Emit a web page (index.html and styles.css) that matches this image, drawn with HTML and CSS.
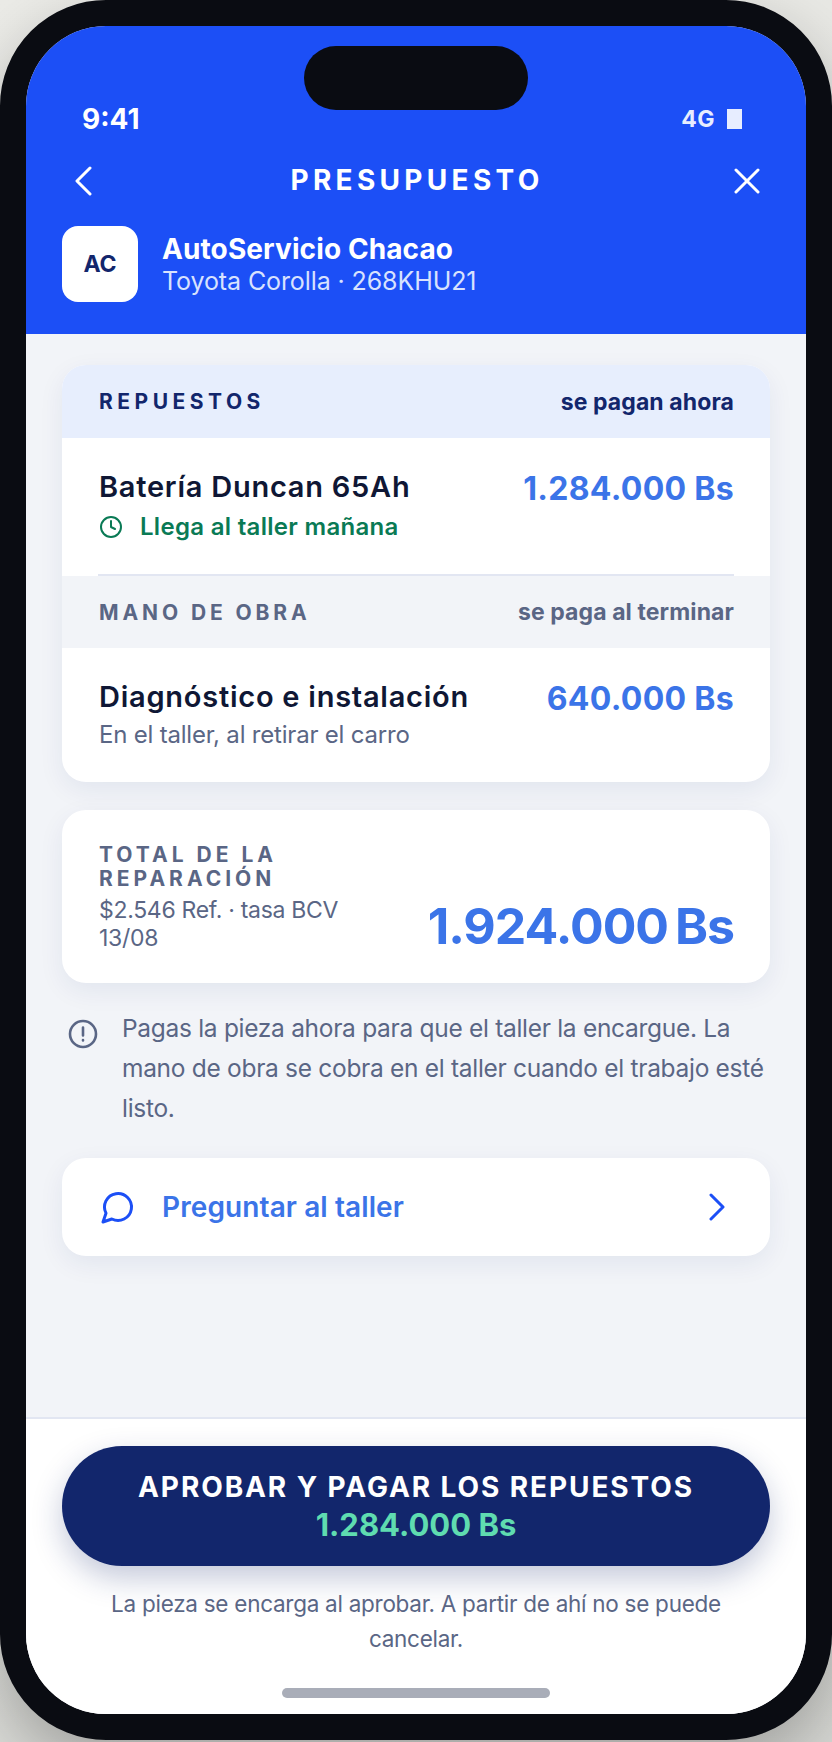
FILE: index.html
```html
<!DOCTYPE html>
<html lang="es">
<head>
    <meta charset="UTF-8">
    <title>Presupuesto</title>
    <link rel="stylesheet" href="styles.css">
</head>
<body>

    <div class="phone">
        <div class="screen">
            <div class="notch"></div>

            <!-- Blue header -->
            <header class="header">
                <div class="status">
                    <span class="time">9:41</span>
                    <span class="signal">4G<i class="battery"></i></span>
                </div>
                <div class="nav">
                    <svg class="nav-icon" width="18" height="30" viewBox="0 0 18 30"><polyline points="16,2 3,15 16,28"/></svg>
                    <h1>PRESUPUESTO</h1>
                    <svg class="nav-icon nav-close" width="26" height="26" viewBox="0 0 26 26"><path d="M2 2 24 24M24 2 2 24"/></svg>
                </div>
                <div class="shop">
                    <div class="avatar">AC</div>
                    <div>
                        <div class="shop-name">AutoServicio Chacao</div>
                        <div class="shop-car">Toyota Corolla · 268KHU21</div>
                    </div>
                </div>
            </header>

            <main class="content">
                <!-- Breakdown -->
                <section class="card">
                    <div class="band band-parts">
                        <span class="band-title">REPUESTOS</span>
                        <span class="band-note">se pagan ahora</span>
                    </div>
                    <div class="row row-first">
                        <div>
                            <div class="row-title">Batería Duncan 65Ah</div>
                            <div class="eta">
                                <svg width="24" height="24" viewBox="0 0 24 24"><circle cx="12" cy="12" r="10"/><polyline points="12,6 12,12 16,14"/></svg>
                                Llega al taller mañana
                            </div>
                        </div>
                        <div class="price">1.284.000 Bs</div>
                    </div>
                    <div class="band band-labor">
                        <span class="band-title">MANO DE OBRA</span>
                        <span class="band-note">se paga al terminar</span>
                    </div>
                    <div class="row">
                        <div>
                            <div class="row-title">Diagnóstico e instalación</div>
                            <div class="row-sub">En el taller, al retirar el carro</div>
                        </div>
                        <div class="price">640.000 Bs</div>
                    </div>
                </section>

                <!-- Total -->
                <section class="card total">
                    <div class="total-left">
                        <div class="total-label">TOTAL DE LA REPARACIÓN</div>
                        <div class="total-ref">$2.546 Ref. · tasa BCV 13/08</div>
                    </div>
                    <div class="total-price">1.924.000 Bs</div>
                </section>

                <div class="note">
                    <svg width="30" height="30" viewBox="0 0 30 30"><circle cx="15" cy="15" r="13"/><path d="M15 8.5v8M15 21v.5"/></svg>
                    <p>Pagas la pieza ahora para que el taller la encargue. La mano de obra se cobra en el taller cuando el trabajo esté listo.</p>
                </div>

                <section class="card ask">
                    <svg class="ask-icon" width="36" height="36" viewBox="0 0 24 24"><path d="M7.9 20A9 9 0 1 0 4 16.1L2 22Z"/></svg>
                    <span class="ask-text">Preguntar al taller</span>
                    <svg class="ask-arrow" width="24" height="28" viewBox="0 0 24 28"><polyline points="2,2 14,14 2,26"/></svg>
                </section>
            </main>

            <!-- Bottom action -->
            <footer class="footer">
                <button class="approve">
                    <span class="approve-text">APROBAR Y PAGAR LOS REPUESTOS</span>
                    <span class="approve-price">1.284.000 Bs</span>
                </button>
                <p class="warning">La pieza se encarga al aprobar. A partir de ahí no se puede cancelar.</p>
                <div class="home-bar"></div>
            </footer>
        </div>
    </div>

</body>
</html>
```

FILE: styles.css
```css
/* General page */
body {
    margin: 0;
    height: 1742px;
    overflow: hidden;
    background: linear-gradient(160deg, #ebebe7 0%, #d6d7d3 100%);
    font-family: Inter, "Liberation Sans", sans-serif;
}

/* Device frame */
.phone {
    box-sizing: border-box;
    width: 832px;
    height: 1740px;
    border: 26px solid #0a0c12;
    border-radius: 106px;
    box-shadow: 0 24px 60px rgba(0, 0, 0, 0.25);
    background: #0a0c12;
}

.screen {
    position: relative;
    display: flex;
    flex-direction: column;
    height: 100%;
    border-radius: 80px;
    overflow: hidden;
    background: #f2f4f8;
}

.notch {
    position: absolute;
    top: 20px;
    left: 278px;
    width: 224px;
    height: 64px;
    border-radius: 32px;
    background: #0a0c12;
}

/* Header */
.header {
    padding: 78px 36px 32px;
    background: #1c4ff6;
    color: white;
}

.status {
    display: flex;
    justify-content: space-between;
    align-items: center;
    height: 28px;
    padding: 1px 28px 0 20px;
    font-weight: 700;
}

.time {
    font-size: 28px;
}

.signal {
    display: flex;
    align-items: center;
    gap: 12px;
    font-size: 23px;
    letter-spacing: 0.5px;
    color: #e7edff;
}

.battery {
    width: 15px;
    height: 20px;
    background: #e7edff;
}

.nav {
    display: grid;
    grid-template-columns: 1fr auto 1fr;
    align-items: center;
    height: 30px;
    margin: 32px 10px 31px 12px;
}

.nav h1 {
    margin: -2px 0 0;
    font-size: 28px;
    font-weight: 700;
    letter-spacing: 4.3px;
}

.nav-icon {
    fill: none;
    stroke: white;
    stroke-width: 3;
    stroke-linecap: round;
    stroke-linejoin: round;
}

.nav-close {
    justify-self: end;
}

.shop {
    display: flex;
    align-items: center;
    gap: 24px;
}

.avatar {
    display: flex;
    justify-content: center;
    align-items: center;
    width: 76px;
    height: 76px;
    border-radius: 16px;
    background: white;
    color: #12266c;
    font-size: 23px;
    font-weight: 700;
}

.shop-name {
    font-size: 28px;
    line-height: 34px;
    font-weight: 700;
    letter-spacing: 0.1px;
}

.shop-car {
    font-size: 25px;
    line-height: 30px;
    letter-spacing: -0.1px;
    color: #d8e2fe;
}

/* Content area */
.content {
    flex: 1;
    padding: 31px 36px 0;
}

.card {
    border-radius: 24px;
    background: white;
    box-shadow: 0 8px 26px rgba(18, 38, 108, 0.07);
    overflow: hidden;
}

.band {
    display: flex;
    justify-content: space-between;
    align-items: center;
    height: 73px;
    padding: 0 36px 0 37px;
}

.band-parts {
    background: #e7eefd;
    color: #12266c;
}

.band-labor {
    height: 72px;
    background: #f2f4f8;
    color: #5a6685;
}

.band-title {
    font-size: 21px;
    font-weight: 700;
    letter-spacing: 4.5px;
}

.band-labor .band-title {
    letter-spacing: 3.9px;
}

.band-note {
    font-size: 23px;
    font-weight: 700;
    letter-spacing: 0.1px;
}

.row {
    display: flex;
    justify-content: space-between;
    padding: 32px 36px 32px 37px;
}

.row-first {
    margin: 0 36px;
    padding: 32px 0;
    border-bottom: 2px solid #e2e6f2;
}

.row-first .row-title,
.row-first .eta {
    margin-left: 1px;
}

.row-title {
    font-size: 29px;
    line-height: 34px;
    font-weight: 600;
    letter-spacing: 0.75px;
    color: #0f1735;
}

.row-sub {
    margin-top: 6px;
    font-size: 24px;
    line-height: 30px;
    letter-spacing: -0.2px;
    color: #5a6685;
}

.eta {
    display: flex;
    align-items: center;
    gap: 17px;
    margin-top: 8px;
    font-size: 24px;
    line-height: 30px;
    font-weight: 600;
    letter-spacing: 0.3px;
    color: #0a7a55;
}

.eta svg {
    fill: none;
    stroke: #0a7a55;
    stroke-width: 2;
    stroke-linecap: round;
    stroke-linejoin: round;
}

.price {
    margin-top: 2px;
    font-size: 32px;
    line-height: 34px;
    font-weight: 700;
    letter-spacing: 0.3px;
    color: #3b74e8;
}

/* Total card */
.total {
    display: flex;
    justify-content: space-between;
    align-items: flex-end;
    gap: 32px;
    margin-top: 28px;
    padding: 33px 36px 31px 37px;
}

.total-left {
    flex: 1;
}

.total-label {
    font-size: 21px;
    line-height: 24px;
    font-weight: 700;
    letter-spacing: 4px;
    color: #5a6685;
}

.total-ref {
    margin-top: 5px;
    font-size: 23px;
    line-height: 28px;
    letter-spacing: -0.3px;
    color: #5a6685;
}

.total-price {
    margin-bottom: 2px;
    font-size: 50px;
    line-height: 48px;
    font-weight: 700;
    letter-spacing: -1px;
    word-spacing: -4px;
    white-space: nowrap;
    color: #3b74e8;
}

/* Explanation text */
.note {
    display: flex;
    gap: 24px;
    margin: 25px 0 30px;
    padding-left: 6px;
}

.note svg {
    flex: none;
    margin-top: 11px;
    fill: none;
    stroke: #5a6685;
    stroke-width: 2.6;
    stroke-linecap: round;
}

.note p {
    margin: 0;
    font-size: 24.5px;
    line-height: 40px;
    letter-spacing: -0.3px;
    color: #5a6685;
}

/* Ask the workshop */
.ask {
    display: flex;
    align-items: center;
    gap: 26px;
    height: 98px;
    padding: 0 37px 0 38px;
}

.ask-icon {
    fill: none;
    stroke: #1c4ff6;
    stroke-width: 2;
    stroke-linejoin: round;
}

.ask-text {
    flex: 1;
    font-size: 28px;
    font-weight: 600;
    letter-spacing: 0.1px;
    color: #3b74e8;
}

.ask-arrow {
    fill: none;
    stroke: #1c4ff6;
    stroke-width: 3;
    stroke-linecap: round;
    stroke-linejoin: round;
}

/* Footer */
.footer {
    padding: 27px 36px 16px;
    border-top: 2px solid #e2e6f2;
    background: white;
}

.approve {
    display: block;
    width: 100%;
    height: 120px;
    padding: 0;
    border: none;
    border-radius: 60px;
    background: #12266c;
    box-shadow: 0 12px 30px rgba(18, 38, 108, 0.25);
    font-family: inherit;
}

.approve-text,
.approve-price {
    display: block;
    line-height: 38px;
    font-weight: 700;
}

.approve-text {
    font-size: 28px;
    letter-spacing: 1.9px;
    color: white;
}

.approve-price {
    font-size: 31px;
    color: #5fdcb0;
}

.warning {
    margin: 20px 0 0;
    padding: 0 10px;
    font-size: 22.5px;
    line-height: 35px;
    letter-spacing: -0.27px;
    text-align: center;
    color: #5a6685;
}

.home-bar {
    width: 268px;
    height: 10px;
    margin: 32px auto 0;
    border-radius: 5px;
    background: #a9adb8;
}
```
